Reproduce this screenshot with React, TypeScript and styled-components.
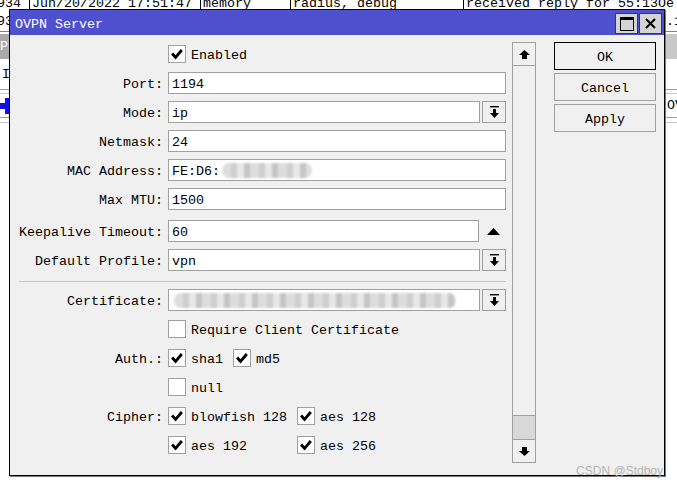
import React from 'react';
import styled, { createGlobalStyle } from 'styled-components';

const MONO = '"Liberation Mono", "DejaVu Sans Mono", monospace';

const Global = createGlobalStyle`
  html, body { margin: 0; padding: 0; background: #fff; }
  body { font-family: ${MONO}; font-size: 13.33px; color: #000; }
  * { box-sizing: border-box; }
`;

const Desktop = styled.div`
  position: relative;
  width: 677px;
  height: 487px;
  overflow: hidden;
  background: #fff;
`;

/* ---------- background (log window behind the dialog) ---------- */
const Backdrop = styled.div`
  display: flex;
  flex-direction: column;
  white-space: nowrap;
`;

const LogLine = styled.div<{ $h: number; $line?: boolean }>`
  display: flex;
  height: ${p => p.$h}px;
  overflow: hidden;
  border-bottom: ${p => (p.$line ? '1px solid #808080' : 'none')};
`;

const LogCell = styled.div<{ $w: number; $first?: boolean; $shift: number }>`
  flex: 0 0 ${p => p.$w}px;
  border-left: ${p => (p.$first ? 'none' : '1px solid #000')};
  padding-left: ${p => (p.$first ? 0 : 2)}px;
  margin-left: ${p => (p.$first ? -3 : 0)}px;
  line-height: 13px;
  overflow: hidden;
  & > span {
    display: block;
    transform: translateY(${p => p.$shift}px);
  }
`;

const TabBand = styled.div`
  margin-top: 2px;
  height: 25px;
  background: #c8c8c8;
  display: flex;
`;

const Tab = styled.div`
  width: 40px;
  background: #a9a9a9;
  color: #fff;
  line-height: 25px;
  margin-left: -8px;
`;

const ToolRow = styled.div`
  height: 31px;
  display: flex;
  align-items: center;
  padding-left: 2px;
  border-bottom: 1px solid #a0a0a0;
`;

const HeaderRow = styled.div`
  margin-top: 3px;
  height: 25px;
  display: grid;
  grid-template-columns: 667px 1fr;
  align-items: center;
  border-top: 1px solid #c8c8c8;
  border-bottom: 1px solid #a0a0a0;
`;

const ListRest = styled.div`
  margin-top: 4px;
  border-top: 1px solid #c8c8c8;
`;

/* ---------- dialog window ---------- */
const Window = styled.div`
  position: absolute;
  left: 9px;
  top: 9px;
  width: 656px;
  height: 467px;
  border: 1px solid #000;
  box-shadow: 1px 1px 0 #7a7a7a;
  background: #f0f0f0;
  display: flex;
  flex-direction: column;
`;

const TitleBar = styled.div`
  height: 25px;
  flex-shrink: 0;
  background: #4f50cd;
  color: #fff;
  display: flex;
  align-items: flex-start;
  padding: 3px 2px 0 5px;
`;

const Title = styled.div`
  flex: 1;
  padding-top: 2px;
  line-height: 19px;
`;

const TitleButton = styled.div`
  width: 23px;
  height: 21px;
  margin-left: 1px;
  background: #d4d4d4;
  border: 1px solid #3a3a3a;
  display: flex;
  align-items: center;
  justify-content: center;
`;

const Body = styled.div`
  flex: 1;
  display: flex;
  align-items: flex-start;
  padding: 7px 8px 11px 0;
  position: relative;
`;

const Form = styled.div`
  width: 496px;
  padding-top: 1px;
  display: flex;
  flex-direction: column;
`;

const Row = styled.div<{ $extraTop?: number }>`
  display: grid;
  grid-template-columns: 153px 338px;
  column-gap: 5px;
  align-items: center;
  height: 22px;
  margin-top: ${p => p.$extraTop || 0}px;
  margin-bottom: 7px;
`;

const Label = styled.div`
  text-align: right;
  white-space: nowrap;
  padding-top: 2px;
`;

const FieldWrap = styled.div`
  display: flex;
  align-items: center;
  gap: 2px;
`;

const Field = styled.div<{ $w: number }>`
  width: ${p => p.$w}px;
  height: 22px;
  background: #fff;
  border: 1px solid #a0a0a0;
  padding: 2px 0 0 3px;
  display: flex;
  align-items: center;
  white-space: nowrap;
  overflow: hidden;
`;

const DropButton = styled.div`
  width: 24px;
  height: 22px;
  background: #f0f0f0;
  border: 1px solid #a0a0a0;
  display: flex;
  align-items: center;
  justify-content: center;
`;

const Spinner = styled.div`
  width: 24px;
  height: 22px;
  display: flex;
  align-items: center;
  justify-content: center;
`;

const Redacted = styled.span<{ $w: number }>`
  display: inline-block;
  width: ${p => p.$w}px;
  height: 15px;
  margin-left: 2px;
  margin-top: -2px;
  border-radius: 7px;
  background: repeating-linear-gradient(
    90deg,
    #d8d8d8 0 9px,
    #c6c6c6 9px 15px,
    #e4e4e4 15px 22px,
    #bcbcbc 22px 28px
  );
  filter: blur(1.2px);
  opacity: 0.85;
`;

const Separator = styled.div`
  height: 1px;
  margin: 3px 0 7px 9px;
  background: #c6c6c6;
`;

const CheckGroup = styled.div<{ $cols?: string }>`
  display: ${p => (p.$cols ? 'grid' : 'flex')};
  grid-template-columns: ${p => p.$cols || 'none'};
  align-items: center;
  column-gap: ${p => (p.$cols ? '0' : '10px')};
`;

const CheckItem = styled.div`
  display: inline-flex;
  align-items: center;
  gap: 5px;
  white-space: nowrap;
  & > span:last-child {
    padding-top: 2px;
  }
`;

const Box = styled.span`
  width: 18px;
  height: 18px;
  flex-shrink: 0;
  background: #fff;
  border: 1px solid #a0a0a0;
  display: inline-flex;
  align-items: center;
  justify-content: center;
`;

const ScrollBar = styled.div`
  margin-left: 6px;
  width: 24px;
  height: 421px;
  display: flex;
  flex-direction: column;
`;

const ScrollButton = styled.div`
  height: 24px;
  flex-shrink: 0;
  border: 1px solid #a0a0a0;
  background: #f0f0f0;
  display: flex;
  align-items: center;
  justify-content: center;
`;

const Track = styled.div`
  flex: 1;
  display: flex;
  flex-direction: column;
  justify-content: flex-end;
  border-left: 1px solid #a0a0a0;
  border-right: 1px solid #a0a0a0;
`;

const Thumb = styled.div`
  height: 24px;
  background: #d9d9d9;
  border-top: 1px solid #a0a0a0;
`;

const ButtonColumn = styled.div`
  margin-left: 18px;
  display: flex;
  flex-direction: column;
  gap: 3px;
`;

const DlgButton = styled.div<{ $default?: boolean }>`
  width: 102px;
  height: 28px;
  padding-top: 2px;
  background: #f0f0f0;
  border: 1px solid ${p => (p.$default ? '#000' : '#a0a0a0')};
  display: flex;
  align-items: center;
  justify-content: center;
`;

const Watermark = styled.div`
  position: absolute;
  right: 1px;
  bottom: -2px;
  font-family: "Liberation Sans", Arial, sans-serif;
  font-size: 12px;
  line-height: 12px;
  color: #b4b4b4;
`;

/* ---------- icons ---------- */
const Tick = () => (
  <svg width="12" height="11" viewBox="0 0 12 11">
    <polygon points="0,5.6 2.2,3.6 4.5,6.3 9.7,0 11.9,2 4.6,10.6" fill="#000" />
  </svg>
);

const DropIcon = () => (
  <svg width="9" height="13" viewBox="0 0 9 13">
    <rect x="0" y="0" width="9" height="1.4" fill="#000" />
    <polygon points="3,3 6,3 6,7 9,7 4.5,12 0,7 3,7" fill="#000" />
  </svg>
);

const ArrowUp = () => (
  <svg width="11" height="9" viewBox="0 0 11 9">
    <polygon points="5.5,0 11,5 8,5 8,9 3,9 3,5 0,5" fill="#000" />
  </svg>
);

const ArrowDown = () => (
  <svg width="11" height="9" viewBox="0 0 11 9">
    <polygon points="5.5,9 11,4 8,4 8,0 3,0 3,4 0,4" fill="#000" />
  </svg>
);

const TriangleUp = () => (
  <svg width="13" height="7" viewBox="0 0 13 7">
    <polygon points="6.5,0 13,7 0,7" fill="#000" />
  </svg>
);

const MaxIcon = () => (
  <svg width="14" height="14" viewBox="0 0 14 14">
    <rect x="0.5" y="0.5" width="13" height="13" fill="none" stroke="#000" strokeWidth="1" />
    <rect x="0" y="0" width="14" height="3" fill="#000" />
  </svg>
);

const CloseIcon = () => (
  <svg width="11" height="11" viewBox="0 0 11 11">
    <path d="M1 1 L10 10 M10 1 L1 10" stroke="#000" strokeWidth="2" />
  </svg>
);

const PlusIcon = () => (
  <svg width="12" height="16" viewBox="0 0 12 16">
    <rect x="0" y="5" width="10" height="6" fill="#1010e0" />
    <rect x="5" y="0" width="4" height="16" fill="#1010e0" />
  </svg>
);

/* ---------- pieces ---------- */
const Check: React.FC<{ checked?: boolean; label: string }> = ({ checked, label }) => (
  <CheckItem>
    <Box>{checked && <Tick />}</Box>
    <span>{label}</span>
  </CheckItem>
);

const TextRow: React.FC<{ label: string; extraTop?: number; children: React.ReactNode }> = ({
  label,
  extraTop,
  children,
}) => (
  <Row $extraTop={extraTop}>
    <Label>{label}</Label>
    {children}
  </Row>
);

const logCols = [32, 171, 90, 173, 240];

export default function App() {
  const row1 = ['934', 'Jun/20/2022 17:51:47', 'memory', 'radius, debug', 'received reply for 55:13Oe'];
  const row2 = ['935', 'Jun/20/2022 17:51:47', 'memory', 'radius, debug', 'sending request to 10.100.10.1'];
  return (
    <Desktop>
      <Global />
      <Backdrop>
        <LogLine $h={11}>
          {row1.map((t, i) => (
            <LogCell key={i} $w={logCols[i]} $first={i === 0} $shift={-3}>
              <span>{t}</span>
            </LogCell>
          ))}
        </LogLine>
        <LogLine $h={21} $line>
          {row2.map((t, i) => (
            <LogCell key={i} $w={logCols[i]} $first={i === 0} $shift={4}>
              <span>{t}</span>
            </LogCell>
          ))}
        </LogLine>
        <TabBand>
          <Tab>PPP</Tab>
        </TabBand>
        <ToolRow>Interface</ToolRow>
        <HeaderRow>
          <PlusIcon />
          <span>OVPN</span>
        </HeaderRow>
        <ListRest />
      </Backdrop>

      <Window>
        <TitleBar>
          <Title>OVPN Server</Title>
          <TitleButton>
            <MaxIcon />
          </TitleButton>
          <TitleButton>
            <CloseIcon />
          </TitleButton>
        </TitleBar>
        <Body>
          <Form>
            <Row>
              <span />
              <Check checked label="Enabled" />
            </Row>
            <TextRow label="Port:">
              <Field $w={338}>1194</Field>
            </TextRow>
            <TextRow label="Mode:">
              <FieldWrap>
                <Field $w={312}>ip</Field>
                <DropButton>
                  <DropIcon />
                </DropButton>
              </FieldWrap>
            </TextRow>
            <TextRow label="Netmask:">
              <Field $w={338}>24</Field>
            </TextRow>
            <TextRow label="MAC Address:">
              <Field $w={338}>
                FE:D6:
                <Redacted $w={90} />
              </Field>
            </TextRow>
            <TextRow label="Max MTU:">
              <Field $w={338}>1500</Field>
            </TextRow>
            <TextRow label="Keepalive Timeout:" extraTop={3}>
              <FieldWrap>
                <Field $w={311}>60</Field>
                <Spinner>
                  <TriangleUp />
                </Spinner>
              </FieldWrap>
            </TextRow>
            <TextRow label="Default Profile:">
              <FieldWrap>
                <Field $w={312}>vpn</Field>
                <DropButton>
                  <DropIcon />
                </DropButton>
              </FieldWrap>
            </TextRow>
            <Separator />
            <TextRow label="Certificate:">
              <FieldWrap>
                <Field $w={312}>
                  <Redacted $w={282} />
                </Field>
                <DropButton>
                  <DropIcon />
                </DropButton>
              </FieldWrap>
            </TextRow>
            <Row>
              <span />
              <Check label="Require Client Certificate" />
            </Row>
            <TextRow label="Auth.:">
              <CheckGroup>
                <Check checked label="sha1" />
                <Check checked label="md5" />
              </CheckGroup>
            </TextRow>
            <Row>
              <span />
              <Check label="null" />
            </Row>
            <TextRow label="Cipher:">
              <CheckGroup $cols="129px auto">
                <Check checked label="blowfish 128" />
                <Check checked label="aes 128" />
              </CheckGroup>
            </TextRow>
            <Row>
              <span />
              <CheckGroup $cols="129px auto">
                <Check checked label="aes 192" />
                <Check checked label="aes 256" />
              </CheckGroup>
            </Row>
          </Form>
          <ScrollBar>
            <ScrollButton>
              <ArrowUp />
            </ScrollButton>
            <Track>
              <Thumb />
            </Track>
            <ScrollButton>
              <ArrowDown />
            </ScrollButton>
          </ScrollBar>
          <ButtonColumn>
            <DlgButton $default>OK</DlgButton>
            <DlgButton>Cancel</DlgButton>
            <DlgButton>Apply</DlgButton>
          </ButtonColumn>
          <Watermark>CSDN @Stdboy</Watermark>
        </Body>
      </Window>
    </Desktop>
  );
}
